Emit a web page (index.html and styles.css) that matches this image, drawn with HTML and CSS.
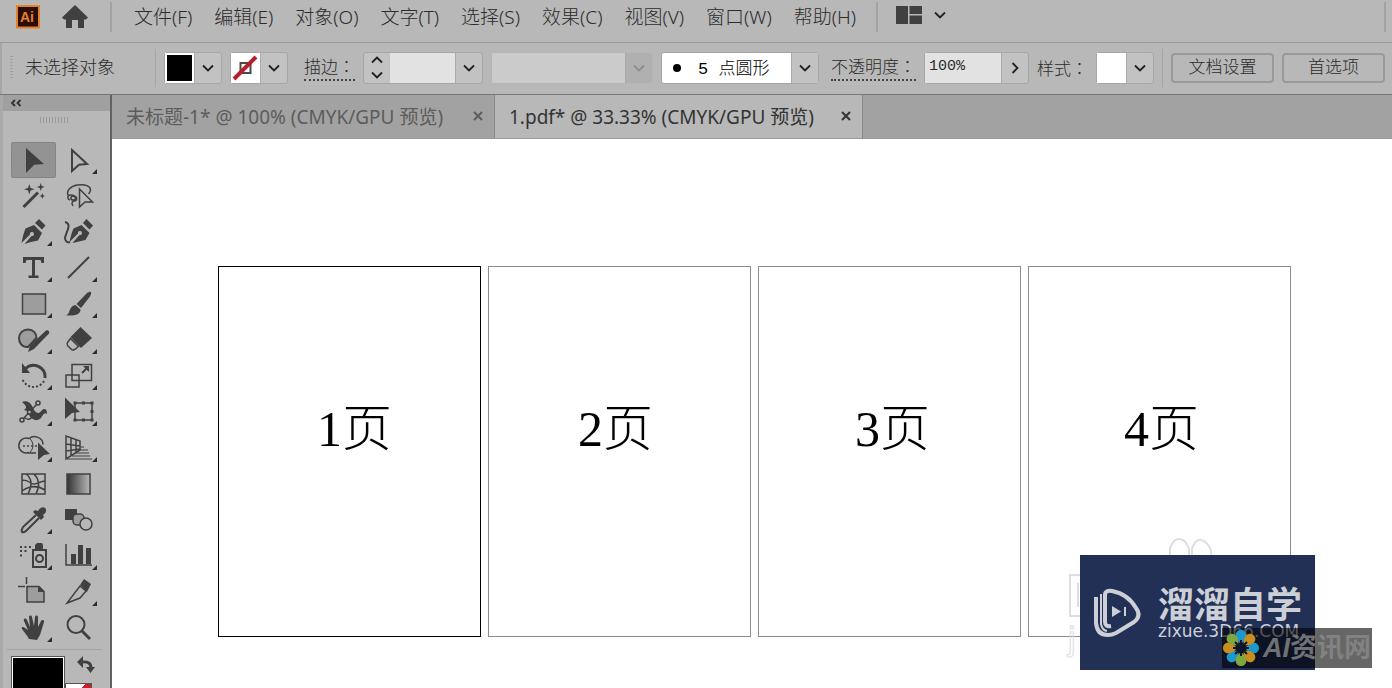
FILE: index.html
```html
<!DOCTYPE html>
<html lang="zh-CN">
<head>
<meta charset="utf-8">
<title>1.pdf* @ 33.33% (CMYK/GPU 预览)</title>
<link rel="stylesheet" href="styles.css">
</head>
<body>
<svg class="defs" aria-hidden="true">
  <symbol id="down" viewBox="0 0 14 14"><path d="M2 4.500l5 5 5-5" fill="none" stroke="currentColor" stroke-width="1.800"/></symbol>
  <symbol id="more" viewBox="0 0 6 6"><path d="M6 0v6H0z" fill="#2c2c2c"/></symbol>
  <symbol id="cross" viewBox="0 0 12 12"><path d="M2 2l8 8M10 2l-8 8" stroke="currentColor" stroke-width="2"/></symbol>
</svg>

<header class="menubar">
  <svg class="app-logo" viewBox="0 0 24 24" aria-hidden="true"><rect x="1" y="1" width="22" height="21.500" fill="#2c0d05" stroke="#e0812b" stroke-width="2"/><text class="logo-text" x="4" y="17">Ai</text></svg>
  <button class="plain home" aria-label="主页"><svg viewBox="0 0 28 24"><path d="M14 0L27 12.500l-2 2h-2V23h-6v-8h-6v8H5v-8.500H3l-2-2z" fill="#404040"/></svg></button>
  <span class="menu-divider"></span>
  <nav class="menus">
    <button class="plain">文件(F)</button><button class="plain">编辑(E)</button><button class="plain">对象(O)</button><button class="plain">文字(T)</button><button class="plain">选择(S)</button><button class="plain">效果(C)</button><button class="plain">视图(V)</button><button class="plain">窗口(W)</button><button class="plain">帮助(H)</button>
  </nav>
  <span class="menu-divider"></span>
  <button class="plain workspace" aria-label="工作区">
    <svg class="ws-icon" viewBox="0 0 26 18" fill="#404040"><path d="M0 0h12v18H0zM13.500 0H26v8H13.500zM13.500 9.500H26V18H13.500z"/></svg>
    <svg class="chevron"><use href="#down"/></svg>
  </button>
  <span class="menu-divider end"></span>
</header>

<section class="controlbar">
  <span class="grip-v"></span>
  <span class="selection">未选择对象</span>
  <span class="bar-divider"></span>
  <div class="combo">
    <button class="swatch fill" aria-label="填色"></button>
    <button class="drop" aria-label="填色选项"><svg class="chevron"><use href="#down"/></svg></button>
  </div>
  <div class="combo">
    <button class="swatch" aria-label="描边颜色"><svg viewBox="0 0 28 30"><rect x="9.500" y="10" width="10" height="10" fill="none" stroke="#4a4a4a" stroke-width="2"/><path d="M3 26L25 4" stroke="#b5202b" stroke-width="4"/></svg></button>
    <button class="drop" aria-label="描边颜色选项"><svg class="chevron"><use href="#down"/></svg></button>
  </div>
  <label class="under stroke-label" for="weight">描边<span class="colon" lang="zh-TW">：</span></label>
  <div class="combo">
    <span class="stepper">
      <button class="step" aria-label="增加"><svg viewBox="0 0 14 14" class="chevron up"><use href="#down"/></svg></button>
      <button class="step" aria-label="减少"><svg class="chevron"><use href="#down"/></svg></button>
    </span>
    <input id="weight" class="field weight" type="text">
    <button class="drop" aria-label="粗细选项"><svg class="chevron"><use href="#down"/></svg></button>
  </div>
  <div class="combo off">
    <input class="field profile" type="text" aria-label="变量宽度配置" disabled>
    <button class="drop" aria-label="宽度配置选项" disabled><svg class="chevron"><use href="#down"/></svg></button>
  </div>
  <div class="combo brush">
    <span class="dot"></span>
    <select class="brush-select" aria-label="画笔定义"><option>5 点圆形</option></select>
    <span class="drop"><svg class="chevron"><use href="#down"/></svg></span>
  </div>
  <label class="under opacity-label" for="opacity">不透明度<span class="colon" lang="zh-TW">：</span></label>
  <div class="combo">
    <input id="opacity" class="field opacity" type="text" value="100%">
    <button class="drop" aria-label="不透明度选项"><svg class="chevron right"><use href="#down"/></svg></button>
  </div>
  <span>样式<span class="colon" lang="zh-TW">：</span></span>
  <div class="combo">
    <button class="swatch" aria-label="图形样式"></button>
    <button class="drop" aria-label="样式选项"><svg class="chevron"><use href="#down"/></svg></button>
  </div>
  <span class="bar-divider"></span>
  <div class="pushes">
    <button class="push">文档设置</button>
    <button class="push">首选项</button>
  </div>
</section>

<div class="workarea">
  <aside class="tools">
    <button class="collapse" aria-label="折叠"><svg viewBox="0 0 12 10"><path d="M5 2L2 5l3 3M10.500 2l-3 3 3 3" fill="none" stroke="#303030" stroke-width="1.800"/></svg></button>
    <div class="grip-h"></div>
    <div class="tool-grid">
      <button class="tool active" aria-label="选择工具"><svg viewBox="0 0 45 36"><path class="solid" d="M15 6l18 16-9.700.700L15 31z"/></svg></button>
      <button class="tool" aria-label="直接选择工具"><svg viewBox="0 0 45 36"><path class="line" d="M16 8l15 14-8 .700L16 29z"/><use href="#more" x="36" y="27" width="5" height="5"/></svg></button>

      <button class="tool" aria-label="魔棒工具"><svg viewBox="0 0 45 36"><path class="line thick" d="M12.500 29L27 14.500"/><path class="solid" d="M18.300 6l1.300 4 4 1.300-4 1.300-1.300 4-1.300-4-4-1.300 4-1.300zM29.700 5l1 3 3 1-3 1-1 3-1-3-3-1 3-1zM31.300 15l.8 2.200 2.200.8-2.200.8-.8 2.200-.8-2.200-2.200-.8 2.200-.8z"/></svg></button>
      <button class="tool" aria-label="套索工具"><svg viewBox="0 0 45 36"><path class="line thin" d="M12.500 18c-3-5 2-10 9-11 8-1 13 1 13 5 0 2-1 3-2 4M14 22c-3-1-3-5 1-5 5 0 6 5 2 5-3 0-3-4 1-4 4 1 3 5 0 5-3 1-2 3-1 5M23.500 11v18l5.500-5h7.500z"/></svg></button>

      <button class="tool" aria-label="钢笔工具"><svg viewBox="0 0 45 36"><path class="solid" d="M10.500 29c1-5 2-10 4-14.500l8.500-3.500 8 8-4 7.500c-5 1-9 2-13.500 3.500l7-8a2 2 0 1 0-1.500-1.500zM24 9l4-4 6.500 6.500-3.500 4z"/><use href="#more" x="36" y="27" width="5" height="5"/></svg></button>
      <button class="tool" aria-label="曲率工具"><svg viewBox="0 0 45 36"><path class="solid" d="M13.500 28c1-5 2-9 4-13.500l8-3.500 8 8-4 7c-5 1-8 2-13 3l7-8a2 2 0 1 0-1.500-1.500zM27 9l3.500-4 6.500 6.500-3.500 4z"/><path class="line" d="M9 8c8 2 0 12 0 16 0 3 2 5 5 4"/></svg></button>

      <button class="tool" aria-label="文字工具"><svg viewBox="0 0 45 36"><path class="solid" d="M12 7h21v6h-2.500l-1-3H24v15.500h3.500V28h-10v-2.500H21V10h-5.500l-1 3H12z"/><use href="#more" x="36" y="27" width="5" height="5"/></svg></button>
      <button class="tool" aria-label="直线段工具"><svg viewBox="0 0 45 36"><path class="line" d="M12 28L33 7"/><use href="#more" x="36" y="27" width="5" height="5"/></svg></button>

      <button class="tool" aria-label="矩形工具"><svg viewBox="0 0 45 36"><rect class="line thin tint" x="11.500" y="8" width="23" height="20"/><use href="#more" x="36" y="27" width="5" height="5"/></svg></button>
      <button class="tool" aria-label="画笔工具"><svg viewBox="0 0 45 36"><path class="solid" d="M34 5.500c2 1 1 3 0 5L25 22l-4.500-4L31 7zM19.500 19l5 4.500c0 5-5 6.500-14.500 6 5-2 2-9 9.500-10.500z"/><use href="#more" x="36" y="27" width="5" height="5"/></svg></button>

      <button class="tool" aria-label="Shaper 工具"><svg viewBox="0 0 45 36"><path class="line tint" d="M16 25c-5 0-8-4-8-9s4-8.500 9-8.500 8.500 3.500 8.500 8.500L17 25z"/><path class="solid" d="M35 8.500c2-1 4 1 3 3L23 27l-6 3 2-6.500z"/><use href="#more" x="36" y="27" width="5" height="5"/></svg></button>
      <button class="tool" aria-label="橡皮擦工具"><svg viewBox="0 0 45 36"><path class="solid" d="M24.500 5L36 16 25 26 14.500 15z"/><path class="line thin" d="M14.500 16.500L11.500 20.500q-1 2 0 3l4 4q1 1 3 0l4-3z"/><use href="#more" x="36" y="27" width="5" height="5"/></svg></button>

      <button class="tool" aria-label="旋转工具"><svg viewBox="0 0 45 36"><path class="line wide" d="M14 11c8-8 21-2 20 9"/><path class="solid" d="M11 5v10h8z"/><path class="line dots" d="M33 23a12 12 0 0 1-22-3"/><use href="#more" x="36" y="27" width="5" height="5"/></svg></button>
      <button class="tool" aria-label="比例缩放工具"><svg viewBox="0 0 45 36"><path class="line thin" d="M16 6.500h19.500v16H16zM10 17h13v12H10z"/><path class="line" d="M26 15l5-5"/><path class="solid" d="M27 8h6v6z"/><use href="#more" x="36" y="27" width="5" height="5"/></svg></button>

      <button class="tool" aria-label="宽度工具"><svg viewBox="0 0 45 36"><path class="solid" d="M11 8c5-2 9 1 11 6s6 7 9 2c3-2 5-1 5 4-3-2-4 1-6 4-4 4-9 2-12-3-1-3-1-4-5-5 3-2 3-4-2-8z"/><path class="line thin" d="M12 25L26 10M14 24c6 4 10-4 8-8"/><circle class="line thin bg" cx="11" cy="26" r="2"/><circle class="line thin bg" cx="27" cy="9" r="2"/><circle class="line thin bg" cx="18.500" cy="18" r="2"/><use href="#more" x="36" y="27" width="5" height="5"/></svg></button>
      <button class="tool" aria-label="自由变换工具"><svg viewBox="0 0 45 36"><path class="line thin" d="M19 9h17v17H19z"/><path class="solid" d="M17.500 7.500h3v3h-3zM26 7.500h3v3h-3zM34.500 7.500h3v3h-3zM34.500 16h3v3h-3zM34.500 24.500h3v3h-3zM26 24.500h3v3h-3zM17.500 24.500h3v3h-3z"/><path class="solid" d="M9 3.500L24 18l-8 1-7 6z"/><use href="#more" x="36" y="27" width="5" height="5"/></svg></button>

      <button class="tool" aria-label="形状生成器工具"><svg viewBox="0 0 45 36"><path class="line thin" d="M18 22.500a7.500 7.500 0 1 1 0-14c5-4 14-1 14 6M17 23h8"/><path class="line fine" d="M19 8.500q6 7 0 14"/><path class="line thin dots" d="M12 16h14"/><path class="solid" d="M27 12.500L39 24l-6 1-6 5z"/><use href="#more" x="36" y="27" width="5" height="5"/></svg></button>
      <button class="tool" aria-label="透视网格工具"><svg viewBox="0 0 45 36"><path class="line thin" d="M10 6v23l14-9v-9zM10 14l14 2M15 8v17M20 10v12M10 21l14-2"/><path class="line fine" d="M24 17h4M23 20h9M20 23h13M16 26h18M11 29h25"/><use href="#more" x="36" y="27" width="5" height="5"/></svg></button>

      <button class="tool" aria-label="网格工具"><svg viewBox="0 0 45 36"><path class="line thin" d="M11 8h23v20H11zM11 14c8 0 8 4 12 4s6-3 11-3M11 25c7-5 15-6 23-1M15 8c7 5 6 12 2 20M23 8c6 6 6 12 2 20"/></svg></button>
      <button class="tool" aria-label="渐变工具"><svg viewBox="0 0 45 36"><defs><linearGradient id="ramp"><stop offset="0" stop-color="#333"/><stop offset="1" stop-color="#b8b8b8"/></linearGradient></defs><rect class="line thin ramp" x="11" y="8" width="23" height="20"/></svg></button>

      <button class="tool" aria-label="吸管工具"><svg viewBox="0 0 45 36"><path class="line" d="M25 13L12 25q-2 4-1 5 2 1 5-2l12-12"/><path class="solid" d="M27 9c3-6 9-4 8 0 0 2-2 3-3 4l1 2-3 3-8-8 2-2z"/><use href="#more" x="36" y="27" width="5" height="5"/></svg></button>
      <button class="tool" aria-label="混合工具"><svg viewBox="0 0 45 36"><path class="solid" d="M9 7h12v11H9z"/><rect class="line thin tint" x="17" y="12" width="11" height="11" rx="4"/><circle class="line thin bg" cx="30" cy="22" r="6"/></svg></button>

      <button class="tool" aria-label="符号喷枪工具"><svg viewBox="0 0 45 36"><path class="line" d="M22 12h13v17H22z"/><circle class="line" cx="28.500" cy="20.500" r="3.500"/><path class="solid" d="M24 11V7l2-2h5l1 2v4zM9 8h2v2H9zM13.500 8h2v2h-2zM18 8h2v2h-2zM9 12h2v2H9zM13.500 12h2v2h-2zM9 16.500h2v2H9z"/><use href="#more" x="36" y="27" width="5" height="5"/></svg></button>
      <button class="tool" aria-label="柱形图工具"><svg viewBox="0 0 45 36"><path class="line thin" d="M10 6v21h26"/><path class="solid" d="M15 16h5v10h-5zM22 7h5v19h-5zM30 10h5v16h-5z"/><use href="#more" x="36" y="27" width="5" height="5"/></svg></button>

      <button class="tool" aria-label="画板工具"><svg viewBox="0 0 45 36"><path class="line thin" d="M15.500 3v7M7 12.500h7"/><path class="line thin tint" d="M16 12.500h12l5 5V28H16z"/><path class="solid" d="M27 12l6 6h-6z"/></svg></button>
      <button class="tool" aria-label="切片工具"><svg viewBox="0 0 45 36"><path class="line thin" d="M24 12l6 5-6 7-13 5z"/><path class="solid" d="M24 11l4-6 7 5-4 8z"/><use href="#more" x="36" y="27" width="5" height="5"/></svg></button>

      <button class="tool" aria-label="抓手工具"><svg viewBox="0 0 45 36"><path class="solid" d="M18 29c-2-4-5-7-7-10-1-2 1-3 3-1l3 2-4-9c-1-3 2-3 3-1l3 7-1-10c0-2 3-2 3 0l2 9 1-9c0-2 3-2 3 0v10l3-6c1-2 4-1 3 1l-4 13-3 5z"/><use href="#more" x="36" y="27" width="5" height="5"/></svg></button>
      <button class="tool" aria-label="缩放工具"><svg viewBox="0 0 45 36"><circle class="line" cx="20" cy="14.500" r="8.500"/><path class="line wide" d="M26 21l8 8"/></svg></button>
    </div>
    <div class="colors">
      <button class="fill-chip" aria-label="填色"></button>
      <div class="color-side">
        <button class="plain swap" aria-label="互换填色和描边"><svg viewBox="0 0 18 18"><path d="M5 6q9-1 9 6" fill="none" stroke="#404040" stroke-width="3"/><path d="M0 6l6-6v12zM9 11h9l-4.500 6z" fill="#404040"/></svg></button>
        <span class="stroke-chip"></span>
      </div>
    </div>
  </aside>

  <main class="document">
    <div class="tabs">
      <div class="tab"><button class="plain">未标题-1* @ 100% (CMYK/GPU 预览)</button><button class="plain close" aria-label="关闭"><svg><use href="#cross"/></svg></button></div>
      <div class="tab current"><button class="plain">1.pdf* @ 33.33% (CMYK/GPU 预览)</button><button class="plain close" aria-label="关闭"><svg><use href="#cross"/></svg></button></div>
    </div>
    <div class="canvas">
      <div class="artboard selected"><span class="page-text p1">1页</span></div>
      <div class="artboard"><span class="page-text p2">2页</span></div>
      <div class="artboard"><span class="page-text p3">3页</span></div>
      <div class="artboard"><span class="page-text p4">4页</span></div>
    </div>
  </main>
</div>

<div class="marks">
  <svg class="ghost" viewBox="0 0 150 122" aria-hidden="true" fill="none" stroke="#dedede" stroke-width="2"><path d="M106 20V10q4-10 10-9t9 10v7M128 18v-7q3-10 9-9t10 10v6M17 37H6v41h12M14 45v24"/><text class="ghost-text" x="4" y="112">j</text></svg>
  <div class="brand">
    <svg class="brand-logo" viewBox="0 0 48 50" fill="none" stroke="#ccd0d6"><path stroke-width="4" d="M2 9v26q1 12 12 12 4 0 8-2l18-11q8-6 2-14Q34 6 18 3q-7-1-7 4v27q0 5 6 4"/><path stroke-width="2" d="M7 6v30q1 6 6 7"/><path d="M18 18v11l9-5.500z" fill="#ccd0d6" stroke="none"/><path stroke-width="2" d="M31 19v9"/></svg>
    <div class="brand-words"><span class="brand-name">溜溜自学</span><span class="brand-site">zixue.3D66.COM</span></div>
  </div>
  <div class="news">
    <svg class="flower" viewBox="-19 -19 38 38" aria-hidden="true">
      <path id="petal" d="M0-4C-8-10-6-18 0-18S8-10 0-4" fill="#1c98ca"/><use href="#petal" transform="rotate(90)"/><use href="#petal" transform="rotate(225)"/>
      <path d="M0-4C-8-10-6-18 0-18S8-10 0-4" fill="#c98d20" transform="rotate(45)"/><path d="M0-4C-8-10-6-18 0-18S8-10 0-4" fill="#c98d20" transform="rotate(135)"/><path d="M0-4C-8-10-6-18 0-18S8-10 0-4" fill="#7ea73e" transform="rotate(180)"/><path d="M0-4C-8-10-6-18 0-18S8-10 0-4" fill="#c98d20" transform="rotate(270)"/><path d="M0-4C-8-10-6-18 0-18S8-10 0-4" fill="#7ea73e" transform="rotate(315)"/>
      <path d="M0-8V8M-8 0H8M-6-6L6 6M6-6L-6 6" stroke="#10172c" stroke-width="2"/>
    </svg>
    <span class="news-name"><i>AI</i>资讯网</span>
  </div>
</div>
</body>
</html>
```

FILE: styles.css
```css
* { box-sizing: border-box; }

body {
  margin: 0;
  height: 100vh;
  display: flex;
  flex-direction: column;
  overflow: hidden;
  position: relative;
  background: #b8b8b8;
  color: #2c2c2c;
  font-family: "Noto Sans", "Noto Sans CJK SC", sans-serif;
  font-size: 19px;
  font-weight: 300;
}

button, input, select { font: inherit; color: inherit; margin: 0; padding: 0; border: 0; border-radius: 0; background: none; }
svg { display: block; }
.defs { position: absolute; width: 0; height: 0; }
.plain { white-space: nowrap; }
.chevron { width: 14px; height: 14px; color: #202020; flex: none; }
.chevron.up { transform: rotate(180deg); }
.chevron.right { transform: rotate(-90deg); }

/* Menu bar */
.menubar { flex: none; display: flex; align-items: center; height: 42px; padding: 0 6px 8px 16px; }
.app-logo { width: 24px; height: 24px; }
.logo-text { font: bold 14px "Liberation Sans", sans-serif; fill: #e0812b; }
.home { margin-left: 21px; }
.home svg { width: 28px; height: 24px; }
.menu-divider { width: 2px; height: 30px; margin-left: 21px; background: #a3a3a3; }
.menus { display: flex; gap: 22px; margin-left: 22px; padding-bottom: 1px; line-height: 28px; }
.menu-divider + .workspace { margin-left: 18px; }
.menus + .menu-divider { margin-left: 20px; }
.workspace { display: flex; align-items: center; gap: 11px; padding-bottom: 4px; }
.ws-icon { width: 26px; height: 18px; }
.menu-divider.end { margin-left: auto; }

/* Control bar */
.controlbar {
  flex: none;
  display: flex;
  align-items: center;
  gap: 8px;
  height: 53px;
  padding: 0 7px 2px 10px;
  border-top: 1px solid #999;
  border-bottom: 1px solid #777;
  box-shadow: inset 2px 0 #a6a6a6;
  font-family: "Liberation Serif", "Noto Sans CJK SC", serif;
  font-size: 17px;
  white-space: nowrap;
}
.controlbar > * { flex: none; }
.grip-v { width: 3px; height: 24px; background: repeating-linear-gradient(#a0a0a0 0 1px, transparent 1px 3px); }
.selection { font-size: 18px; width: 126px; padding: 0 0 4px 4px; }
.bar-divider { width: 1px; height: 38px; background: #a6a6a6; }
.combo { display: flex; height: 32px; border: 1px solid #a6a6a6; border-radius: 3px; background: #c2c2c2; }
.swatch { width: 29px; background: #fff; }
.swatch svg { width: 28px; height: 30px; }
.swatch.fill { background: #000; border: 2px solid #fff; }
.drop { width: 27px; display: flex; align-items: center; justify-content: center; border-left: 1px solid #aaa; }
.under { border-bottom: 2px dotted #444; line-height: 22px; }
.colon { font-family: "Noto Sans CJK TC", sans-serif; }
.stroke-label { margin-left: 8px; }
.opacity-label { margin-left: 4px; }
.stepper { display: flex; flex-direction: column; width: 26px; }
.step { flex: 1; display: flex; align-items: center; justify-content: center; }
.field { background: #e2e2e2; }
.weight { width: 65px; }
.profile { width: 133px; background: #cbcbcb; }
.off { background: #b0b0b0; border-color: #b6b6b6; }
.off .chevron { color: #8c8c8c; }
.brush { position: relative; background: #fff; width: 158px; }
.brush .drop { position: absolute; right: 0; top: 0; height: 30px; background: #c2c2c2; pointer-events: none; }
.brush-select { appearance: none; width: 100%; padding: 3px 0 0 36px; color: #000; outline: 0; font-family: "Liberation Mono", "Noto Sans CJK SC", monospace; }
.dot { position: absolute; left: 11px; top: 11px; width: 8px; height: 8px; border-radius: 50%; background: #000; }
.opacity { width: 76px; padding: 0 0 3px 4px; font-family: "Liberation Mono", monospace; font-size: 15px; }
.controlbar > .pushes { flex: 1; display: flex; gap: 8px; min-width: 0; }
.push { flex: 1; min-width: 0; height: 30px; border: 2px solid #999; border-radius: 4px; line-height: 24px; }

/* Work area */
.workarea { flex: 1; min-height: 0; display: flex; }
.tools { flex: none; display: flex; flex-direction: column; width: 112px; border-left: 3px solid #a9a9a9; border-right: 2px solid #626262; }
.collapse { flex: none; height: 16px; padding-left: 7px; background: #a0a0a0; }
.collapse svg { width: 12px; height: 10px; }
.grip-h { flex: none; width: 29px; height: 6px; margin: 6px 0 19px 37px; background: repeating-linear-gradient(90deg, #999 0 1px, transparent 1px 3px); }
.tool-grid { display: grid; grid-template-columns: 45px 45px; padding-left: 8px; }
.tool { height: 36px; border-radius: 3px; }
.tool svg { width: 45px; height: 36px; }
.tool.active { background: #939393; box-shadow: inset 0 0 0 1px #858585; }
.solid { fill: #404040; }
.line { fill: none; stroke: #404040; stroke-width: 2; }
.line.thin { stroke-width: 1.5; }
.line.fine { stroke-width: 1; }
.line.thick { stroke-width: 3; }
.line.wide { stroke-width: 3; }
.line.dots { stroke-dasharray: 2 2; }
.line.tint { fill: #9d9d9d; }
.line.bg { fill: #b8b8b8; }
.line.ramp { fill: url(#ramp); }
.colors { display: flex; margin: 3px 8px 0 4px; padding: 6px 0 0 4px; border-top: 1px solid #a3a3a3; }
.fill-chip { width: 54px; height: 54px; background: #000; border: 1px solid #555; box-shadow: inset 0 0 0 1px #fff; }
.color-side { display: flex; flex-direction: column; gap: 9px; }
.swap { margin-left: 12px; }
.swap svg { width: 18px; height: 18px; }
.stroke-chip { width: 27px; height: 27px; border: 1px solid #555; background: linear-gradient(to bottom right, #fff 40%, #c71f2b 40% 60%, #fff 60%); }

.document { flex: 1; min-width: 0; display: flex; flex-direction: column; background: #fff; }
.tabs { flex: none; display: flex; height: 44px; background: #a2a2a2; border-bottom: 1px solid #999; font-weight: 400; }
.tab { display: flex; align-items: center; justify-content: space-between; width: 383px; padding: 0 10px 2px 14px; color: #5c5c5c; border-right: 1px solid #888; }
.tab.current { width: 368px; background: #b8b8b8; color: #333; }
.close svg { width: 12px; height: 12px; }

/* Artboards */
.canvas { flex: 1; display: flex; align-items: flex-start; gap: 7px; padding: 127px 0 0 106px; }
.artboard { flex: none; position: relative; width: 263px; height: 371px; border: 1px solid #8c8c8c; }
.artboard.selected { border-color: #000; }
.page-text { position: absolute; top: 127px; color: #000; font: 300 50px/70px "Liberation Serif", "Noto Sans CJK SC", serif; white-space: nowrap; }
.p1 { left: 98px; }
.p2 { left: 89px; }
.p3 { left: 96px; }
.p4 { left: 95px; }

/* Overlay marks */
.marks { position: absolute; right: 20px; bottom: 18px; width: 308px; height: 132px; }
.ghost { position: absolute; left: 0; top: 0; width: 150px; height: 122px; }
.ghost-text { font: 34px "Liberation Sans", sans-serif; stroke-width: 1px; }
.brand { position: absolute; left: 16px; bottom: 0; width: 235px; height: 115px; display: flex; padding: 28px 0 0 14px; background: #223056; color: #ccd0d6; }
.brand-logo { width: 48px; height: 60px; }
.brand-words { display: flex; flex-direction: column; padding-left: 16px; }
.brand-name { font: 700 36px/38px "Noto Sans CJK SC", sans-serif; white-space: nowrap; }
.brand-site { font: 400 17px/20px "DejaVu Sans", sans-serif; }
.news { position: absolute; right: 0; bottom: 2px; width: 150px; height: 40px; display: flex; align-items: center; gap: 3px; background: rgba(0, 0, 0, 0.6); color: #898989; }
.flower { width: 38px; height: 38px; }
.news-name { font: bold 27px/32px "Liberation Sans", "Noto Sans CJK SC", sans-serif; white-space: nowrap; opacity: 0.8; }
```
